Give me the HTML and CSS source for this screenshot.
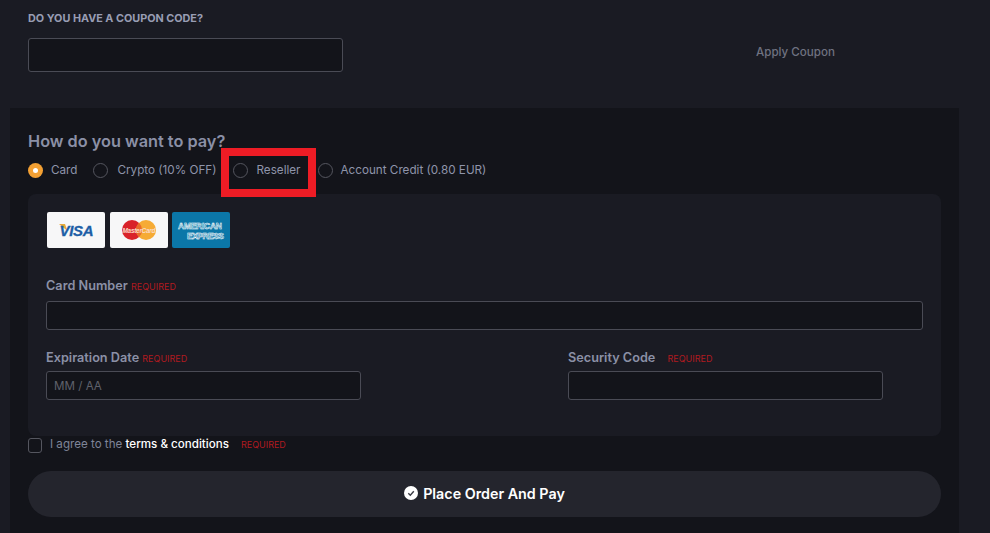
FILE: index.html
```html
<!DOCTYPE html>
<html lang="en">
<head>
<meta charset="utf-8">
<title>Checkout</title>
<link rel="stylesheet" href="styles.css">
</head>
<body>
<section class="coupon">
  <div class="coupon-label">DO YOU HAVE A COUPON CODE?</div>
  <div class="coupon-row">
    <div class="input coupon-input"></div>
    <div class="apply">Apply Coupon</div>
  </div>
</section>
<section class="panel">
  <h2 class="title">How do you want to pay?</h2>
  <div class="methods">
    <div class="method method-card"><span class="radio radio-on"></span><span>Card</span></div>
    <div class="method method-crypto"><span class="radio"></span><span>Crypto (10% OFF)</span></div>
    <div class="method method-reseller"><span class="radio"></span><span>Reseller</span><span class="highlight"></span></div>
    <div class="method"><span class="radio"></span><span>Account Credit (0.80 EUR)</span></div>
  </div>
  <div class="card-box">
    <div class="logos">
      <div class="logo">
        <svg width="58" height="36" viewBox="0 0 58 36"><path d="M12 12h6l2.500 7z" fill="#e9a93a"/><text x="29.500" y="24" text-anchor="middle" textLength="34" class="visa-text">VISA</text></svg>
      </div>
      <div class="logo">
        <svg width="58" height="36" viewBox="0 0 58 36"><circle cx="22" cy="18" r="10" fill="#d9222a"/><circle cx="36" cy="18" r="10" fill="#f6ab35"/><path d="M29 10.860a10 10 0 0 1 0 14.280a10 10 0 0 1 0-14.280z" fill="#ea6b2b"/><text x="29" y="20.500" text-anchor="middle" textLength="33" class="mc-text">MasterCard</text></svg>
      </div>
      <div class="logo logo-amex">
        <svg width="58" height="36" viewBox="0 0 58 36"><text x="28" y="16.500" text-anchor="middle" textLength="44" class="amex-text">AMERICAN</text><text x="33.500" y="26.500" text-anchor="middle" textLength="37" class="amex-text">EXPRESS</text></svg>
      </div>
    </div>
    <div class="field field-number">
      <div class="field-label">Card Number <span class="req">REQUIRED</span></div>
      <div class="input input-field"></div>
    </div>
    <div class="field-row">
      <div class="field field-half">
        <div class="field-label">Expiration Date <span class="req">REQUIRED</span></div>
        <div class="input input-field placeholder">MM / AA</div>
      </div>
      <div class="field field-half">
        <div class="field-label">Security Code <span class="req req-wide">REQUIRED</span></div>
        <div class="input input-field"></div>
      </div>
    </div>
  </div>
  <div class="agree">
    <span class="checkbox"></span>
    <span class="agree-text">I agree to the <strong>terms &amp; conditions</strong></span>
    <span class="req req-agree">REQUIRED</span>
  </div>
  <button class="pay" type="button">
    <svg width="14" height="14" viewBox="0 0 14 14"><circle cx="7" cy="7" r="7" fill="#fff"/><path d="M4.300 7.200l2 2 3.500-4" fill="none" stroke="#3a3b44" stroke-width="1.400"/></svg>
    <span>Place Order And Pay</span>
  </button>
</section>
</body>
</html>
```
FILE: styles.css
```css
* { box-sizing: border-box; }
html, body { height: 100%; }
body {
  margin: 0;
  height: 533px;
  overflow: hidden;
  background: #1a1b23;
  font-family: Inter, "Liberation Sans", sans-serif;
  color: #8b90a6;
}
.coupon { height: 108px; padding: 13px 28px 0; }
.coupon-label { font-size: 10.800px; line-height: 12px; font-weight: 700; color: #989db3; }
.coupon-row { display: flex; align-items: center; margin-top: 13px; }
.input { background: #13141a; border: 1px solid #4a4b55; border-radius: 3px; }
.coupon-input { width: 315px; height: 34px; }
.apply { margin: 0 0 7px 413px; font-size: 11.600px; font-weight: 500; color: #6f7280; }
.panel {
  width: 949px;
  height: 425px;
  margin-left: 10px;
  padding: 23px 18px 0;
  background: #13141a;
}
.title { margin: 0; font-size: 16.300px; line-height: 20px; font-weight: 600; color: #8b90a6; }
.methods { display: flex; align-items: center; margin-top: 9px; height: 20px; font-size: 11.700px; color: #8f94aa; }
.method { position: relative; display: flex; align-items: center; gap: 8px; }
.method-card { margin-right: 16px; }
.method-crypto { margin-right: 17px; gap: 9px; }
.method-reseller { margin-right: 17px; }
.radio { width: 15px; height: 15px; border: 1px solid #55565f; border-radius: 50%; flex: none; }
.radio-on { background: #f3a033; border: 0; position: relative; }
.radio-on::after { content: ""; position: absolute; left: 5px; top: 5px; width: 5px; height: 5px; border-radius: 50%; background: #fff; }
.highlight {
  position: absolute;
  left: -12px;
  top: -15px;
  width: 95px;
  height: 49px;
  border: 8px solid #ee1c25;
}
.card-box {
  margin-top: 14px;
  width: 913px;
  height: 242px;
  padding: 18px 18px 0;
  background: #1a1b23;
  border-radius: 8px;
}
.logos { display: flex; gap: 5px; margin-left: 1px; }
.logo { width: 58px; height: 36px; background: #f7f7f8; border-radius: 2px; }
.logo:last-child { margin-left: -1px; }
.logo svg { display: block; }
.logo-amex { background: #0b77a8; }
.visa-text { font: italic 700 15px "Liberation Sans", sans-serif; fill: #1c5ea6; stroke: #1c5ea6; stroke-width: .3px; }
.mc-text { font: italic 700 6.500px "Liberation Sans", sans-serif; fill: #fbd9c4; }
.amex-text { font: 700 8.500px "Liberation Sans", sans-serif; fill: #0b77a8; stroke: #fff; stroke-width: .5px; }
.field-number { margin-top: 31px; }
.field-label { font-size: 12.700px; line-height: 14px; font-weight: 600; color: #8b90a6; }
.req { font-size: 9px; font-weight: 400; color: #b01a20; }
.req-wide { margin-left: 9px; }
.input-field { margin-top: 5px; height: 29px; }
.field-number .input-field { width: 877px; margin-top: 7px; }
.field-row { display: flex; gap: 207px; margin-top: 21px; }
.field-half { width: 315px; }
.placeholder { display: flex; align-items: center; padding-left: 7px; font-size: 11.600px; color: #5f616b; }
.agree { display: flex; align-items: center; height: 17px; margin-top: 1px; font-size: 11.600px; color: #7f8498; }
.checkbox { width: 14px; height: 15px; border: 1px solid #55565f; border-radius: 3px; margin-right: 8px; }
.agree-text { position: relative; top: -2px; }
.agree-text strong { font-weight: 500; color: #fff; }
.req-agree { margin-left: 12px; position: relative; top: -1px; }
.pay {
  display: flex;
  align-items: center;
  justify-content: center;
  gap: 5px;
  width: 913px;
  height: 46px;
  margin-top: 17px;
  padding: 0 0 2px;
  border: 0;
  border-radius: 23px;
  background: #24252d;
  color: #fff;
  font: 600 14.300px Inter, "Liberation Sans", sans-serif;
}
```
